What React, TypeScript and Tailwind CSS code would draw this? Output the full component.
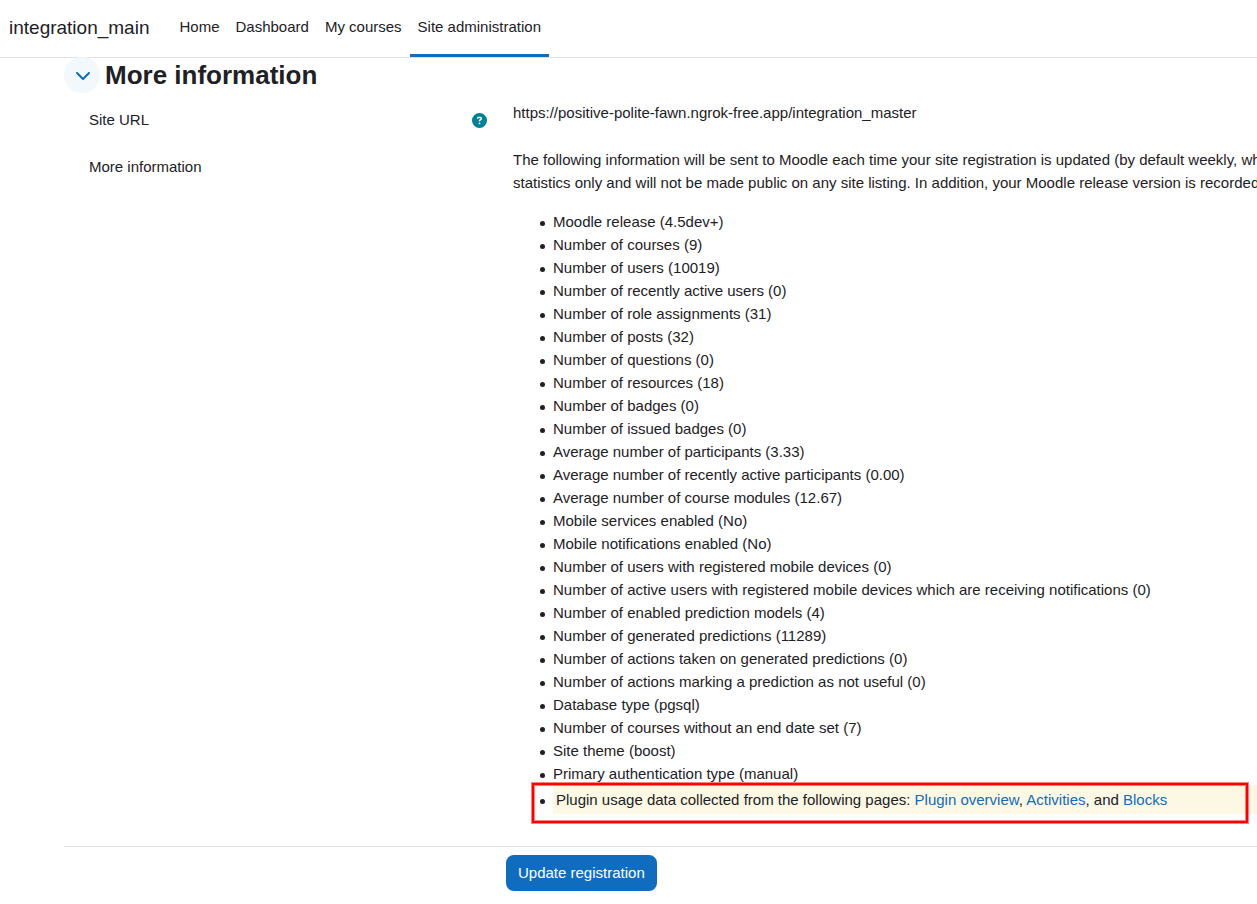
import { Fragment } from "react";
import type { ReactNode } from "react";
import clsx from "clsx";
import { FaChevronDown, FaCircleQuestion } from "react-icons/fa6";

const NAV_ITEMS = ["Home", "Dashboard", "My courses", "Site administration"];
const ACTIVE_ITEM = "Site administration";

const SITE_STATS: [string, string][] = [
  ["Moodle release", "4.5dev+"],
  ["Number of courses", "9"],
  ["Number of users", "10019"],
  ["Number of recently active users", "0"],
  ["Number of role assignments", "31"],
  ["Number of posts", "32"],
  ["Number of questions", "0"],
  ["Number of resources", "18"],
  ["Number of badges", "0"],
  ["Number of issued badges", "0"],
  ["Average number of participants", "3.33"],
  ["Average number of recently active participants", "0.00"],
  ["Average number of course modules", "12.67"],
  ["Mobile services enabled", "No"],
  ["Mobile notifications enabled", "No"],
  ["Number of users with registered mobile devices", "0"],
  [
    "Number of active users with registered mobile devices which are receiving notifications",
    "0",
  ],
  ["Number of enabled prediction models", "4"],
  ["Number of generated predictions", "11289"],
  ["Number of actions taken on generated predictions", "0"],
  ["Number of actions marking a prediction as not useful", "0"],
  ["Database type", "pgsql"],
  ["Number of courses without an end date set", "7"],
  ["Site theme", "boost"],
  ["Primary authentication type", "manual"],
];

const PLUGIN_PAGES = [
  { before: "", label: "Plugin overview" },
  { before: ", ", label: "Activities" },
  { before: ", and ", label: "Blocks" },
];

// Small round bullet hanging in the list's left padding
const BULLET =
  "before:inline-block before:size-[5px] before:rounded-full before:bg-current before:align-middle";

interface FormRowProps {
  label: string;
  help?: boolean;
  children: ReactNode;
}

function FormRow({ label, help, children }: FormRowProps) {
  return (
    <div className="flex">
      <div className="flex w-[424px] shrink-0 items-start justify-between pt-[7px] pr-[26px]">
        <span>{label}</span>
        {help && (
          <button
            type="button"
            aria-label={`Help with ${label}`}
            className="flex h-6 items-center text-[#008196]"
          >
            <FaCircleQuestion className="size-[15px]" />
          </button>
        )}
      </div>
      <div className="min-w-0 flex-1">{children}</div>
    </div>
  );
}

function Navbar() {
  return (
    <header className="flex h-[58px] border-b border-[#dee2e6] pl-[9px]">
      <a href="#" className="flex items-center pb-[2px] text-[19px]">
        integration_main
      </a>
      <nav className="ml-[22px] flex">
        {NAV_ITEMS.map((item) => (
          <a
            key={item}
            href="#"
            className={clsx(
              "flex items-center border-b-3 px-2 pb-[2px]",
              item === ACTIVE_ITEM ? "border-[#0f6cbf]" : "border-transparent"
            )}
          >
            {item}
          </a>
        ))}
      </nav>
    </header>
  );
}

export default function App() {
  return (
    <div className="min-h-screen overflow-x-hidden bg-white font-['Liberation_Sans',Arial,sans-serif] text-[15px] leading-[23px] text-[#1d2125]">
      <Navbar />
      <main className="pl-16">
        <div className="-mt-px flex items-center gap-[5px]">
          <button
            type="button"
            aria-label="Collapse More information"
            aria-expanded="true"
            className="grid size-9 place-items-center rounded-full bg-[#f3f8fc] pl-[2px] text-[#0f6cbf]"
          >
            <FaChevronDown className="size-4" />
          </button>
          <h3 className="text-[26px] leading-9 font-bold">More information</h3>
        </div>

        <div className="flex flex-col gap-4 pt-2 pl-[25px]">
          <FormRow label="Site URL" help>
            https://positive-polite-fawn.ngrok-free.app/integration_master
          </FormRow>
          <FormRow label="More information">
            <p className="mb-4 whitespace-nowrap">
              The following information will be sent to Moodle each time your
              site registration is updated (by default weekly, wh
              <br />
              statistics only and will not be made public on any site listing.
              In addition, your Moodle release version is recorded
            </p>
            <ul className="pl-10">
              {SITE_STATS.map(([name, value]) => (
                <li
                  key={name}
                  className={clsx(BULLET, "before:mr-2 before:-ml-[13px]")}
                >
                  {name} ({value})
                </li>
              ))}
              <li
                className={clsx(
                  BULLET,
                  "relative bg-[#fcf8e3] p-[3px] before:mr-[11px] before:-ml-4"
                )}
              >
                Plugin usage data collected from the following pages:{" "}
                {PLUGIN_PAGES.map(({ before, label }) => (
                  <Fragment key={label}>
                    {before}
                    <a href="#" className="text-[#0f6cbf]">
                      {label}
                    </a>
                  </Fragment>
                ))}
                {/* Red marker around the plugin usage entry */}
                <span className="pointer-events-none absolute -top-0.5 right-[9px] -bottom-[9px] -left-[21px] border-2 border-[#ff0000] inset-ring inset-ring-[#ff0000]/50 ring ring-[#ff0000]/50" />
              </li>
            </ul>
          </FormRow>
        </div>

        <div className="mt-8 border-t border-[#dee2e6] pt-2 pb-3 pl-[442px]">
          <button
            type="button"
            className="h-9 rounded-lg bg-[#0f6cbf] px-3 pb-[2px] text-white"
          >
            Update registration
          </button>
        </div>
      </main>
    </div>
  );
}
